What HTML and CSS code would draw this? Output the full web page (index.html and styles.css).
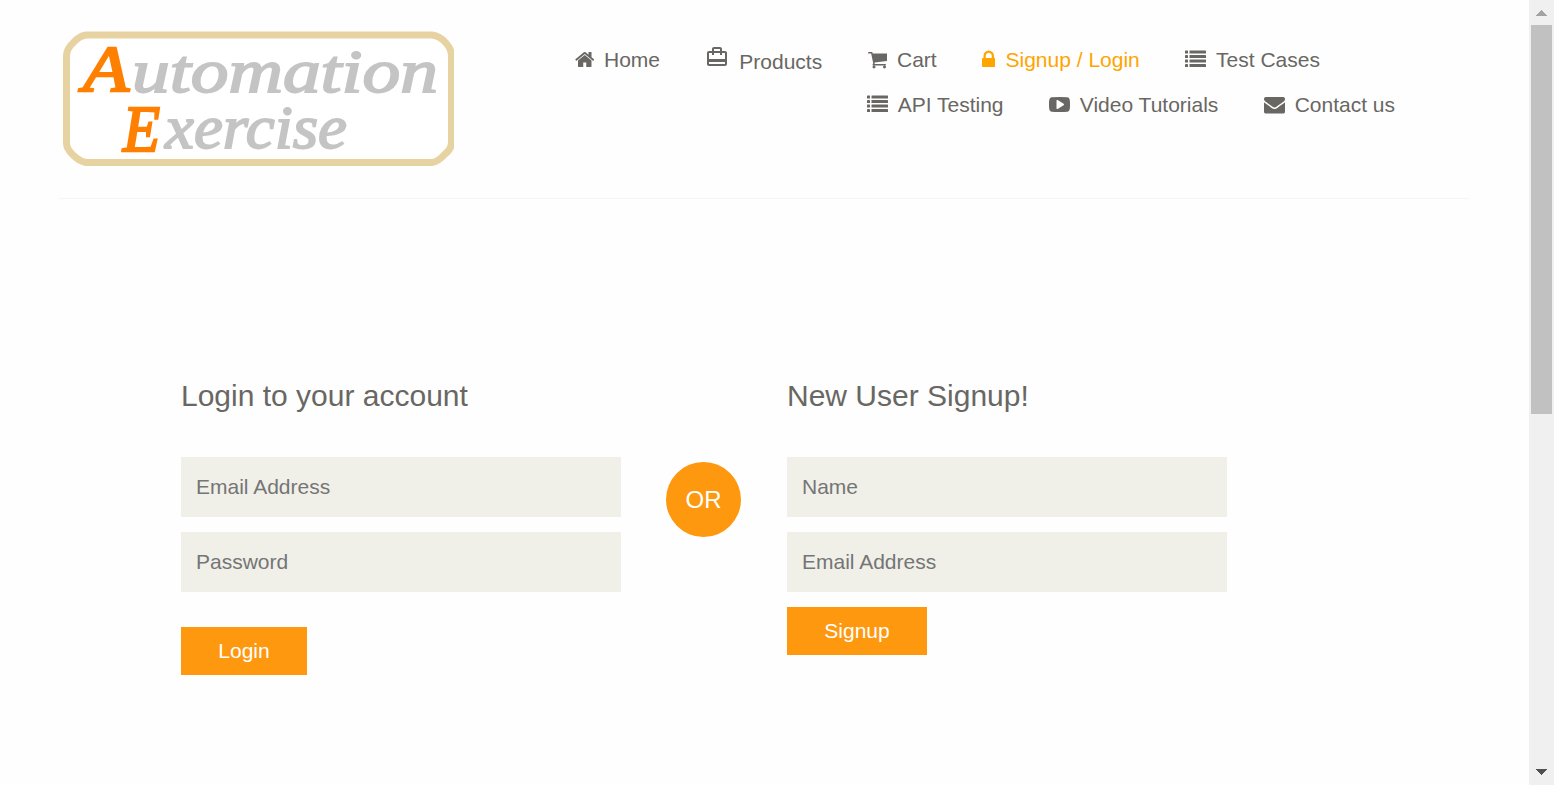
FILE: index.html
```html
<!DOCTYPE html>
<html lang="en">
<head>
<meta charset="utf-8">
<title>Automation Exercise - Signup / Login</title>
<link rel="stylesheet" href="styles.css">
</head>
<body>
<svg class="defs" width="0" height="0" aria-hidden="true">
  <symbol id="list" viewBox="0 0 1792 1792">
    <rect x="0" y="128" width="256" height="256" rx="32"/><rect x="384" y="128" width="1408" height="256" rx="32"/>
    <rect x="0" y="512" width="256" height="256" rx="32"/><rect x="384" y="512" width="1408" height="256" rx="32"/>
    <rect x="0" y="896" width="256" height="256" rx="32"/><rect x="384" y="896" width="1408" height="256" rx="32"/>
    <rect x="0" y="1280" width="256" height="256" rx="32"/><rect x="384" y="1280" width="1408" height="256" rx="32"/>
  </symbol>
</svg>
<div class="window">
  <div class="page">
    <header class="header">
      <svg class="logo" width="393" height="139" viewBox="61 29 393 139" role="img" aria-label="Automation Exercise">
        <path class="logo-frame" d="M86 35H432Q440 36 446 43Q451.500 49 451.500 56V142Q451.500 149 445 154Q438 162 432 162.500H86Q79 161 73 155Q66.500 149 66.500 143V56Q66.500 49 73 43Q79 36 86 35Z"/>
        <text class="logo-text" y="91"><tspan class="logo-initial" x="83" textLength="46" lengthAdjust="spacingAndGlyphs">A</tspan></text>
        <text class="logo-text" x="132" y="92" textLength="306" lengthAdjust="spacingAndGlyphs">utomation</text>
        <text class="logo-text" y="151"><tspan class="logo-initial" x="123" textLength="37" lengthAdjust="spacingAndGlyphs">E</tspan></text>
        <text class="logo-text" x="165" y="148" textLength="182" lengthAdjust="spacingAndGlyphs">xercise</text>
      </svg>
      <nav class="nav">
        <div class="nav-row">
          <a class="item"><svg class="icon w-mid" viewBox="64 0 1664 1792"><path d="M1472 992v480q0 26-19 45t-45 19h-384v-384h-256v384h-384q-26 0-45-19t-19-45v-480q0-1 .5-3t.5-3l575-474 575 474q1 2 1 6zm223-69l-62 74q-8 9-21 11h-3q-13 0-21-7l-692-577-692 577q-12 8-24 7-13-2-21-11l-62-74q-8-10-7-23.500t11-21.500l719-599q32-26 76-26t76 26l244 204v-195q0-14 9-23t23-9h192q14 0 23 9t9 23v408l219 182q10 8 11 21.500t-7 23.500z"/></svg><span>Home</span></a>
          <a class="item products"><svg class="icon bag" viewBox="0 0 24 24"><path d="M20 6h-3V4c0-1.110-.89-2-2-2H9c-1.110 0-2 .89-2 2v2H4c-1.110 0-2 .89-2 2v11c0 1.110.89 2 2 2h16c1.110 0 2-.89 2-2V8c0-1.110-.89-2-2-2zM9 4h6v2H9V4zm11 15H4v-2h16v2zm0-5H4V8h3v2h2V8h6v2h2V8h3v6z"/></svg><span>Products</span></a>
          <a class="item"><svg class="icon w-mid" viewBox="64 0 1664 1792"><path d="M704 1536q0 52-38 90t-90 38-90-38-38-90 38-90 90-38 90 38 38 90zm896 0q0 52-38 90t-90 38-90-38-38-90 38-90 90-38 90 38 38 90zm128-1088v512q0 24-16.500 42.500t-40.500 21.500l-1044 122q13 60 13 70 0 16-24 64h920q26 0 45 19t19 45-19 45-45 19h-1024q-26 0-45-19t-19-45q0-11 8-31.500t16-36 21.500-40 15.500-29.500l-177-823h-204q-26 0-45-19t-19-45 19-45 45-19h256q16 0 28.500 6.500t19.500 15.500 13 24.500 8 26 5.500 29.500 4.500 26h1201q26 0 45 19t19 45z"/></svg><span>Cart</span></a>
          <a class="item active"><svg class="icon w-slim" viewBox="320 0 1152 1792"><path d="M640 768h512v-192q0-106-75-181t-181-75-181 75-75 181v192zm832 96v576q0 40-28 68t-68 28h-960q-40 0-68-28t-28-68v-576q0-40 28-68t68-28h32v-192q0-184 132-316t316-132 316 132 132 316v192h32q40 0 68 28t28 68z"/></svg><span>Signup / Login</span></a>
          <a class="item"><svg class="icon"><use href="#list"/></svg><span>Test Cases</span></a>
        </div>
        <div class="nav-row second">
          <a class="item"><svg class="icon"><use href="#list"/></svg><span>API Testing</span></a>
          <a class="item"><svg class="icon" viewBox="0 0 1792 1792"><path d="M1280 896q0-37-30-54l-512-320q-31-20-65-2-33 18-33 56v640q0 38 33 56 16 8 31 8 20 0 34-10l512-320q30-17 30-54zm512 0q0 96-1 150t-8.500 136.500-22.500 147.500q-16 73-69 123t-124 58q-222 25-671 25t-671-25q-71-8-124.500-58t-69.500-123q-14-65-21.500-147.500t-8.500-136.500-1-150 1-150 8.500-136.500 22.500-147.500q16-73 69-123t124-58q222-25 671-25t671 25q71 8 124.500 58t69.500 123q14 65 21.500 147.500t8.500 136.500 1 150z"/></svg><span>Video Tutorials</span></a>
          <a class="item"><svg class="icon" viewBox="0 0 1792 1792"><path d="M1792 710v794q0 66-47 113t-113 47h-1472q-66 0-113-47t-47-113v-794q44 49 101 87 362 246 497 345 57 42 92.500 65.500t94.500 48 110 24.500h2q51 0 110-24.500t94.500-48 92.500-65.500q170-123 498-345 57-39 100-87zm0-294q0 79-49 151t-122 123q-376 261-468 325-10 7-42.500 31t-54 38.500-52 32.500-57.500 27-50 9h-2q-23 0-50-9t-57.500-27-52-32.500-54-38.500-42.500-31q-91-64-262-182.500t-205-142.500q-62-42-117-115.500t-55-136.500q0-78 41.500-130t118.500-52h1472q65 0 112.500 47t47.500 113z"/></svg><span>Contact us</span></a>
        </div>
      </nav>
    </header>
    <main class="forms">
      <form class="form">
        <h2 class="title">Login to your account</h2>
        <input class="field" type="email" placeholder="Email Address">
        <input class="field" type="password" placeholder="Password">
        <button class="button login" type="button">Login</button>
      </form>
      <div class="or">OR</div>
      <form class="form">
        <h2 class="title">New User Signup!</h2>
        <input class="field" type="text" placeholder="Name">
        <input class="field" type="email" placeholder="Email Address">
        <button class="button signup" type="button">Signup</button>
      </form>
    </main>
  </div>
  <div class="scrollbar">
    <svg class="arrow" width="25" height="25" viewBox="0 0 25 25" shape-rendering="crispEdges"><path fill="#a3a3a3" d="M12.500 10L18.500 16H6.500Z"/></svg>
    <div class="thumb"></div>
    <svg class="arrow down" width="25" height="25" viewBox="0 0 25 25" shape-rendering="crispEdges"><path fill="#505050" d="M6.500 9H18.500L12.500 15Z"/></svg>
  </div>
</div>
</body>
</html>
```
FILE: styles.css
```css
* { box-sizing: border-box; }
body {
  margin: 0;
  overflow: hidden;
  background: #fefefe;
  color: #696763;
  font-family: "Liberation Sans", Arial, sans-serif;
}
.defs { display: block; height: 0; }
.window { display: flex; height: 785px; }
.page { flex: 1; }

.header {
  display: flex;
  height: 199px;
  margin: 0 60px 0 59px;
  border-bottom: 1px solid #f5f5f5;
}
.logo { margin: 29px 0 0 2px; flex: none; }
.logo-frame { fill: #fff; stroke: #e7d2a2; stroke-width: 7; }
.logo-text {
  font: italic 400 62px "Viner Hand ITC", "Liberation Serif", serif;
  fill: #c4c4c4;
  stroke: #c4c4c4;
  stroke-width: 1.8;
}
.logo-initial { font-size: 66px; fill: #ff8000; stroke: #ff8000; stroke-width: 2.4; }

.nav { margin: 37px 0 0 120.5px; }
.nav-row { display: flex; gap: 45.3px; height: 45px; }
.nav-row.second { padding-left: 292.2px; }
.item {
  display: flex;
  align-items: flex-start;
  gap: 10px;
  font-size: 21px;
  line-height: 45px;
  white-space: nowrap;
}
.icon { width: 21px; height: 21px; margin-top: 12px; fill: currentColor; flex: none; }
.icon.w-mid { width: 19.5px; }
.icon.w-slim { width: 13.5px; }
.icon.bag { width: 24px; height: 24px; margin: 8px 0.5px 0 -0.5px; }
.products span { padding-top: 2px; }
.active { color: #ffa500; }

.forms { display: flex; padding: 178px 0 0 181px; }
.form { width: 440px; display: flex; flex-direction: column; align-items: flex-start; }
.title { margin: 0 0 44px; padding-top: 1px; font-size: 30px; font-weight: 400; line-height: 35px; }
.field {
  width: 440px;
  height: 60px;
  margin: 0 0 15px;
  padding: 0 15px;
  border: 0;
  background: #f0f0e9;
  font: 21px "Liberation Sans", Arial, sans-serif;
}
.field::placeholder { color: #757575; opacity: 1; }
.button {
  height: 48px;
  padding: 0;
  border: 0;
  background: #fe980f;
  color: #fff;
  font: 21px "Liberation Sans", Arial, sans-serif;
}
.login { width: 126px; margin-top: 20px; }
.signup { width: 140px; }
.or {
  width: 75px;
  height: 75px;
  margin: 85px 46px 0 45px;
  border-radius: 50%;
  background: #fe980f;
  color: #fff;
  font-size: 24px;
  line-height: 75px;
  text-align: center;
}

.scrollbar { display: flex; flex-direction: column; width: 25px; background: #f0f0f0; }
.thumb { width: 21px; height: 389px; margin-left: 2px; background: #c1c1c1; }
.arrow.down { margin-top: auto; }
```
